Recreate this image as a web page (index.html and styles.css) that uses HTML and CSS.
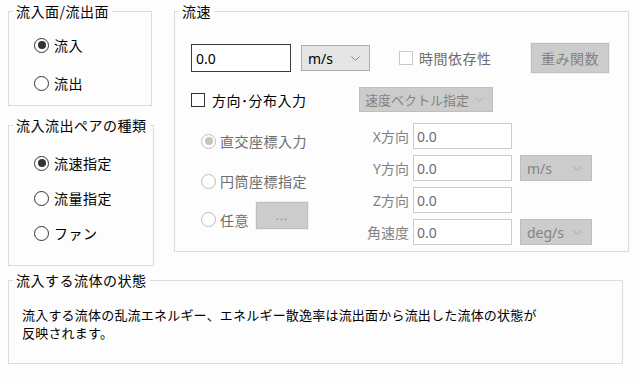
FILE: index.html
```html
<!DOCTYPE html>
<html lang="ja">
<head>
    <meta charset="UTF-8">
    <title>流入面設定</title>
    <link rel="stylesheet" href="styles.css">
</head>
<body>
    <div class="page">
        <div class="top">
            <div class="left-col">
                <fieldset class="group g-face">
                    <legend>流入面/流出面</legend>
                    <div class="radios">
                        <label class="radio checked"><span class="dot"></span>流入</label>
                        <label class="radio"><span class="dot"></span>流出</label>
                    </div>
                </fieldset>
                <fieldset class="group g-pair">
                    <legend>流入流出ペアの種類</legend>
                    <div class="radios">
                        <label class="radio checked"><span class="dot"></span>流速指定</label>
                        <label class="radio"><span class="dot"></span>流量指定</label>
                        <label class="radio"><span class="dot"></span>ファン</label>
                    </div>
                </fieldset>
            </div>

            <fieldset class="group g-speed">
                <legend>流速</legend>
                <div class="row1">
                    <input class="value" type="text" value="0.0">
                    <div class="combo unit">m/s<svg class="chev" width="9" height="5" viewBox="0 0 9 5"><path d="M0.5 0.5 L4.5 4.5 L8.5 0.5" fill="none" stroke="#8a8a8a"/></svg></div>
                    <label class="check off time"><span class="box"></span>時間依存性</label>
                    <button class="btn off weight">重み関数</button>
                </div>
                <div class="row2">
                    <label class="check dir"><span class="box"></span>方向･分布入力</label>
                    <div class="combo off vec"><span>速度ベクトル指定</span><svg class="chev" width="9" height="5" viewBox="0 0 9 5"><path d="M0.5 0.5 L4.5 4.5 L8.5 0.5" fill="none" stroke="#a9a9a9"/></svg></div>
                </div>
                <div class="lower">
                    <div class="coords">
                        <label class="radio off checked r1"><span class="dot"></span>直交座標入力</label>
                        <label class="radio off r2"><span class="dot"></span>円筒座標指定</label>
                        <div class="r3">
                            <label class="radio off"><span class="dot"></span>任意</label>
                            <button class="btn off dots">...</button>
                        </div>
                    </div>
                    <div class="vec-grid">
                        <span class="lbl">X方向</span>
                        <input class="num" type="text" value="0.0" disabled>
                        <span></span>
                        <span class="lbl">Y方向</span>
                        <input class="num" type="text" value="0.0" disabled>
                        <div class="combo off small">m/s<svg class="chev" width="9" height="5" viewBox="0 0 9 5"><path d="M0.5 0.5 L4.5 4.5 L8.5 0.5" fill="none" stroke="#a9a9a9"/></svg></div>
                        <span class="lbl">Z方向</span>
                        <input class="num" type="text" value="0.0" disabled>
                        <span></span>
                        <span class="lbl">角速度</span>
                        <input class="num" type="text" value="0.0" disabled>
                        <div class="combo off small">deg/s<svg class="chev" width="9" height="5" viewBox="0 0 9 5"><path d="M0.5 0.5 L4.5 4.5 L8.5 0.5" fill="none" stroke="#a9a9a9"/></svg></div>
                    </div>
                </div>
            </fieldset>
        </div>

        <fieldset class="group g-state">
            <legend>流入する流体の状態</legend>
            <p class="note">流入する流体の乱流エネルギー、エネルギー散逸率は流出面から流出した流体の状態が<br>反映されます。</p>
        </fieldset>
    </div>
</body>
</html>
```

FILE: styles.css
```css
body {
    margin: 0;
    background-color: #fdfdfd;
    font-family: "Noto Sans", "Noto Sans CJK JP", sans-serif;
    font-size: 14px;
    color: #000;
}
.page {
    display: flex;
    flex-direction: column;
    gap: 6px;
    padding: 3px 0 0 8px;
}
.top {
    display: flex;
    gap: 20px;
}
.left-col {
    display: flex;
    flex-direction: column;
    gap: 11px;
}

/* group boxes */
.group {
    box-sizing: border-box;
    margin: 0;
    padding: 0;
    border: 1px solid #dcdcdc;
    min-width: 0;
}
.group legend {
    margin-left: 4px;
    padding: 0 3px;
    font-family: "Noto Sans CJK JP", sans-serif;
    font-size: 14px;
    line-height: 16px;
    letter-spacing: 0.5px;
}
.g-face {
    width: 144px;
    height: 103px;
}
.g-pair {
    width: 146px;
    height: 149px;
}
.g-speed {
    width: 455px;
    height: 249px;
}
.g-state {
    width: 615px;
    height: 92px;
}

/* radios & checks */
.radios {
    display: flex;
    flex-direction: column;
    padding-left: 25px;
}
.g-face .radios {
    padding-top: 16px;
    gap: 18px;
}
.g-pair .radios {
    padding-top: 20px;
    gap: 15px;
}
.radio,
.check {
    display: flex;
    align-items: center;
    height: 20px;
    font-family: "Noto Sans CJK JP", sans-serif;
    letter-spacing: 0.5px;
    white-space: nowrap;
}
.radio .dot {
    box-sizing: border-box;
    width: 15px;
    height: 15px;
    margin-right: 5px;
    border: 1px solid #333;
    border-radius: 50%;
    background: #fff;
    display: flex;
    align-items: center;
    justify-content: center;
}
.radio.checked .dot::after {
    content: "";
    width: 8px;
    height: 8px;
    border-radius: 50%;
    background: #333;
}
.radio.off {
    color: #6d6d6d;
}
.radio.off .dot {
    border-color: #bcbcbc;
}
.radio.off.checked .dot::after {
    background: #c4c4c4;
}
.check .box {
    box-sizing: border-box;
    width: 14px;
    height: 14px;
    border: 1px solid #333;
    background: #fff;
}
.check.off {
    color: #6d6d6d;
}
.check.off .box {
    border-color: #c8c8c8;
}

/* speed group */
.row1 {
    display: flex;
    align-items: center;
    height: 30px;
    margin-top: 24px;
    padding-left: 16px;
}
.value {
    box-sizing: border-box;
    width: 100px;
    height: 28px;
    margin: 0;
    padding: 0 4px;
    border: 1px solid #3c3c3c;
    background: #fff;
    font-family: "Noto Sans", sans-serif;
    font-size: 14px;
    color: #000;
    outline: none;
}
.combo {
    box-sizing: border-box;
    display: flex;
    align-items: center;
    justify-content: space-between;
    height: 26px;
    padding: 0 9px 0 6px;
    border: 1px solid #adadad;
    background: #e5e5e5;
    font-size: 14px;
    white-space: nowrap;
}
.combo.off {
    border-color: #bfbfbf;
    background: #cccccc;
    color: #838383;
}
.chev {
    flex-shrink: 0;
}
.unit {
    width: 69px;
    margin-left: 10px;
}
.time {
    margin-left: 29px;
}
.time .box {
    margin-right: 6px;
}
.btn {
    box-sizing: border-box;
    margin: 0;
    font-family: "Noto Sans CJK JP", sans-serif;
    font-size: 14px;
    letter-spacing: 0.5px;
    border: 1px solid #bfbfbf;
    background: #cccccc;
    color: #838383;
    outline: 1px solid #f0f0f0;
    padding: 0;
}
.weight {
    width: 78px;
    height: 30px;
    margin-left: auto;
    margin-right: 19px;
}
.row2 {
    display: flex;
    align-items: center;
    height: 25px;
    margin-top: 14px;
    padding-left: 16px;
}
.dir {
    width: 168px;
}
.dir .box {
    margin-right: 7px;
}
.vec {
    width: 134px;
    height: 25px;
    font-family: "Noto Sans CJK JP", sans-serif;
    font-size: 13px;
    padding: 0 8px 0 5px;
}
.lower {
    display: flex;
    margin-top: 11px;
}
.coords {
    width: 162px;
    padding-left: 26px;
    display: flex;
    flex-direction: column;
}
.coords .radio {
    height: 26px;
}
.coords .dot {
    margin-right: 4px;
}
.r1 {
    margin-top: 5px;
}
.r2 {
    margin-top: 14px;
}
.r3 {
    display: flex;
    align-items: center;
    margin-top: 8px;
    height: 27px;
}
.r3 .radio {
    margin-top: 8px;
}
.dots {
    width: 52px;
    height: 27px;
    margin-left: 7px;
    font-family: "Noto Sans", sans-serif;
    font-size: 11px;
    letter-spacing: 1px;
}
.vec-grid {
    display: grid;
    grid-template-columns: 46px 99px 76px;
    grid-auto-rows: 26px;
    column-gap: 4px;
    row-gap: 6px;
    align-items: center;
}
.lbl {
    text-align: right;
    font-family: "Noto Sans", "Noto Sans CJK JP", sans-serif;
    color: #838383;
    white-space: nowrap;
}
.num {
    box-sizing: border-box;
    width: 99px;
    height: 26px;
    margin: 0;
    padding: 0 3px;
    border: 1px solid #cccccc;
    background: #fff;
    font-family: "Noto Sans", sans-serif;
    font-size: 14px;
    color: #6d6d6d;
}
.small {
    width: 72px;
    margin-left: 4px;
}

/* state group */
.note {
    margin: 18px 0 0 13px;
    font-family: "Noto Sans CJK JP", sans-serif;
    font-size: 13px;
    line-height: 18px;
    letter-spacing: 0.2px;
}
```
